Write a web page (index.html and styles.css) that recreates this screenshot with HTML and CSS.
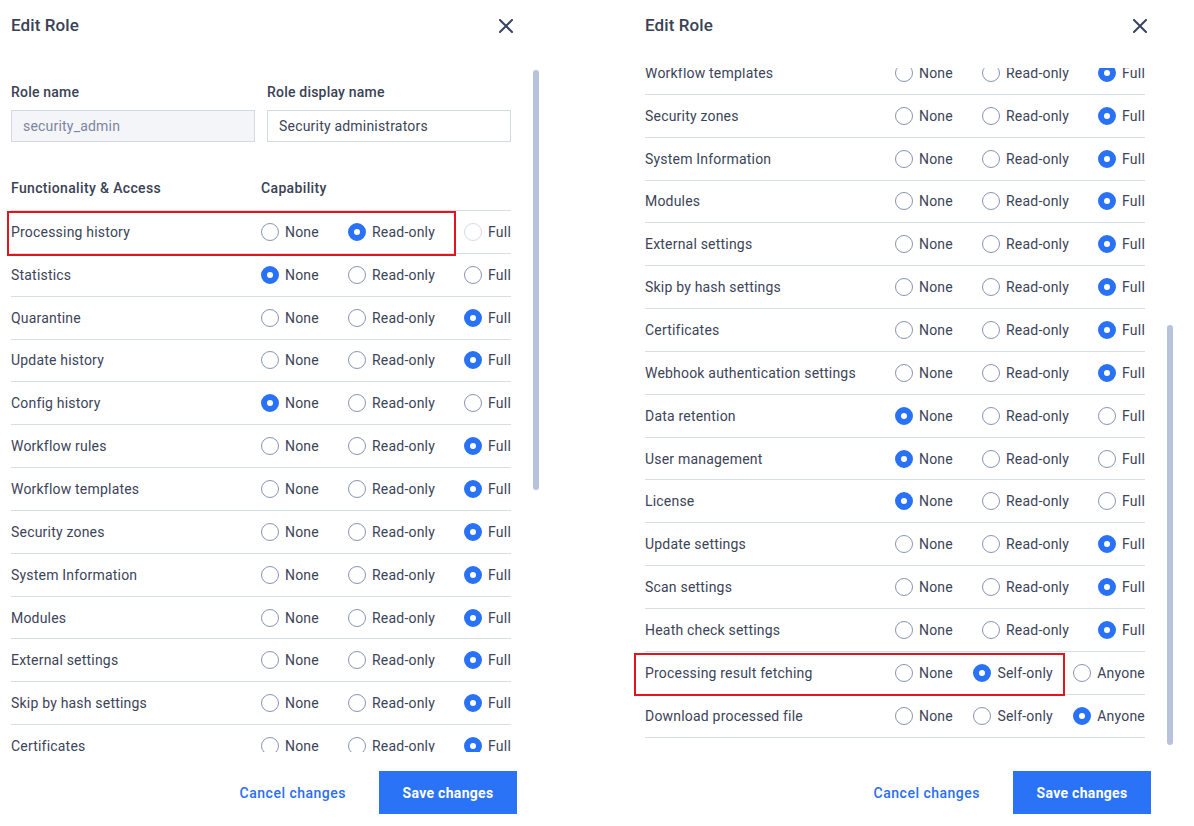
FILE: index.html
```html
<!DOCTYPE html>
<html lang="en">
<head>
<meta charset="utf-8">
<title>Edit Role</title>
<link rel="stylesheet" href="styles.css">
</head>
<body>
<div class="screen">

<section class="panel">
  <header class="panel-head">
    <h2 class="title">Edit Role</h2>
    <button class="close" aria-label="Close"><svg viewBox="0 0 14 14" width="14" height="14"><path d="M1 1 L13 13 M13 1 L1 13" stroke="#3a4460" stroke-width="2" stroke-linecap="square" fill="none"/></svg></button>
  </header>
  <div class="scroll">
    <div class="viewport">
      <div class="content">
        <div class="form">
          <div class="field"><label class="field-label">Role name</label><div class="input input-disabled">security_admin</div></div>
          <div class="field"><label class="field-label">Role display name</label><div class="input">Security administrators</div></div>
        </div>
        <div class="table-head"><span class="th-name">Functionality &amp; Access</span><span class="th-cap">Capability</span></div>
        <div class="row hl-a"><span class="name">Processing history</span><div class="opts"><span class="opt"><i class="radio"></i>None</span><span class="opt"><i class="radio on"></i>Read-only</span><span class="opt"><i class="radio dis"></i>Full</span></div></div>
        <div class="row"><span class="name">Statistics</span><div class="opts"><span class="opt"><i class="radio on"></i>None</span><span class="opt"><i class="radio"></i>Read-only</span><span class="opt"><i class="radio"></i>Full</span></div></div>
        <div class="row"><span class="name">Quarantine</span><div class="opts"><span class="opt"><i class="radio"></i>None</span><span class="opt"><i class="radio"></i>Read-only</span><span class="opt"><i class="radio on"></i>Full</span></div></div>
        <div class="row"><span class="name">Update history</span><div class="opts"><span class="opt"><i class="radio"></i>None</span><span class="opt"><i class="radio"></i>Read-only</span><span class="opt"><i class="radio on"></i>Full</span></div></div>
        <div class="row"><span class="name">Config history</span><div class="opts"><span class="opt"><i class="radio on"></i>None</span><span class="opt"><i class="radio"></i>Read-only</span><span class="opt"><i class="radio"></i>Full</span></div></div>
        <div class="row"><span class="name">Workflow rules</span><div class="opts"><span class="opt"><i class="radio"></i>None</span><span class="opt"><i class="radio"></i>Read-only</span><span class="opt"><i class="radio on"></i>Full</span></div></div>
        <div class="row"><span class="name">Workflow templates</span><div class="opts"><span class="opt"><i class="radio"></i>None</span><span class="opt"><i class="radio"></i>Read-only</span><span class="opt"><i class="radio on"></i>Full</span></div></div>
        <div class="row"><span class="name">Security zones</span><div class="opts"><span class="opt"><i class="radio"></i>None</span><span class="opt"><i class="radio"></i>Read-only</span><span class="opt"><i class="radio on"></i>Full</span></div></div>
        <div class="row"><span class="name">System Information</span><div class="opts"><span class="opt"><i class="radio"></i>None</span><span class="opt"><i class="radio"></i>Read-only</span><span class="opt"><i class="radio on"></i>Full</span></div></div>
        <div class="row"><span class="name">Modules</span><div class="opts"><span class="opt"><i class="radio"></i>None</span><span class="opt"><i class="radio"></i>Read-only</span><span class="opt"><i class="radio on"></i>Full</span></div></div>
        <div class="row"><span class="name">External settings</span><div class="opts"><span class="opt"><i class="radio"></i>None</span><span class="opt"><i class="radio"></i>Read-only</span><span class="opt"><i class="radio on"></i>Full</span></div></div>
        <div class="row"><span class="name">Skip by hash settings</span><div class="opts"><span class="opt"><i class="radio"></i>None</span><span class="opt"><i class="radio"></i>Read-only</span><span class="opt"><i class="radio on"></i>Full</span></div></div>
        <div class="row"><span class="name">Certificates</span><div class="opts"><span class="opt"><i class="radio"></i>None</span><span class="opt"><i class="radio"></i>Read-only</span><span class="opt"><i class="radio on"></i>Full</span></div></div>
      </div>
    </div>
    <div class="track"><div class="thumb"></div></div>
  </div>
  <footer class="panel-foot">
    <button class="btn-link">Cancel changes</button>
    <button class="btn-primary">Save changes</button>
  </footer>
</section>

<section class="panel">
  <header class="panel-head">
    <h2 class="title">Edit Role</h2>
    <button class="close" aria-label="Close"><svg viewBox="0 0 14 14" width="14" height="14"><path d="M1 1 L13 13 M13 1 L1 13" stroke="#3a4460" stroke-width="2" stroke-linecap="square" fill="none"/></svg></button>
  </header>
  <div class="scroll">
    <div class="viewport">
      <div class="content content-scrolled" style="margin-top:-16px">
        <div class="row"><span class="name">Workflow templates</span><div class="opts"><span class="opt"><i class="radio"></i>None</span><span class="opt"><i class="radio"></i>Read-only</span><span class="opt"><i class="radio on"></i>Full</span></div></div>
        <div class="row"><span class="name">Security zones</span><div class="opts"><span class="opt"><i class="radio"></i>None</span><span class="opt"><i class="radio"></i>Read-only</span><span class="opt"><i class="radio on"></i>Full</span></div></div>
        <div class="row"><span class="name">System Information</span><div class="opts"><span class="opt"><i class="radio"></i>None</span><span class="opt"><i class="radio"></i>Read-only</span><span class="opt"><i class="radio on"></i>Full</span></div></div>
        <div class="row"><span class="name">Modules</span><div class="opts"><span class="opt"><i class="radio"></i>None</span><span class="opt"><i class="radio"></i>Read-only</span><span class="opt"><i class="radio on"></i>Full</span></div></div>
        <div class="row"><span class="name">External settings</span><div class="opts"><span class="opt"><i class="radio"></i>None</span><span class="opt"><i class="radio"></i>Read-only</span><span class="opt"><i class="radio on"></i>Full</span></div></div>
        <div class="row"><span class="name">Skip by hash settings</span><div class="opts"><span class="opt"><i class="radio"></i>None</span><span class="opt"><i class="radio"></i>Read-only</span><span class="opt"><i class="radio on"></i>Full</span></div></div>
        <div class="row"><span class="name">Certificates</span><div class="opts"><span class="opt"><i class="radio"></i>None</span><span class="opt"><i class="radio"></i>Read-only</span><span class="opt"><i class="radio on"></i>Full</span></div></div>
        <div class="row"><span class="name">Webhook authentication settings</span><div class="opts"><span class="opt"><i class="radio"></i>None</span><span class="opt"><i class="radio"></i>Read-only</span><span class="opt"><i class="radio on"></i>Full</span></div></div>
        <div class="row"><span class="name">Data retention</span><div class="opts"><span class="opt"><i class="radio on"></i>None</span><span class="opt"><i class="radio"></i>Read-only</span><span class="opt"><i class="radio"></i>Full</span></div></div>
        <div class="row"><span class="name">User management</span><div class="opts"><span class="opt"><i class="radio on"></i>None</span><span class="opt"><i class="radio"></i>Read-only</span><span class="opt"><i class="radio"></i>Full</span></div></div>
        <div class="row"><span class="name">License</span><div class="opts"><span class="opt"><i class="radio on"></i>None</span><span class="opt"><i class="radio"></i>Read-only</span><span class="opt"><i class="radio"></i>Full</span></div></div>
        <div class="row"><span class="name">Update settings</span><div class="opts"><span class="opt"><i class="radio"></i>None</span><span class="opt"><i class="radio"></i>Read-only</span><span class="opt"><i class="radio on"></i>Full</span></div></div>
        <div class="row"><span class="name">Scan settings</span><div class="opts"><span class="opt"><i class="radio"></i>None</span><span class="opt"><i class="radio"></i>Read-only</span><span class="opt"><i class="radio on"></i>Full</span></div></div>
        <div class="row"><span class="name">Heath check settings</span><div class="opts"><span class="opt"><i class="radio"></i>None</span><span class="opt"><i class="radio"></i>Read-only</span><span class="opt"><i class="radio on"></i>Full</span></div></div>
        <div class="row hl-b"><span class="name">Processing result fetching</span><div class="opts"><span class="opt"><i class="radio"></i>None</span><span class="opt"><i class="radio on"></i>Self-only</span><span class="opt"><i class="radio"></i>Anyone</span></div></div>
        <div class="row"><span class="name">Download processed file</span><div class="opts"><span class="opt"><i class="radio"></i>None</span><span class="opt"><i class="radio"></i>Self-only</span><span class="opt"><i class="radio on"></i>Anyone</span></div></div>
      </div>
    </div>
    <div class="track"><div class="thumb" style="margin-top:255px"></div></div>
  </div>
  <footer class="panel-foot">
    <button class="btn-link">Cancel changes</button>
    <button class="btn-primary">Save changes</button>
  </footer>
</section>

</div>
</body>
</html>
```

FILE: styles.css
```css
* { box-sizing: border-box; }

html, body {
  margin: 0;
  padding: 0;
  background: #ffffff;
}

body {
  font-family: Roboto, "Liberation Sans", sans-serif;
  color: #3c4458;
  font-size: 14px;
  letter-spacing: 0.2px;
}

.screen {
  display: flex;
  gap: 74px;
  width: 1194px;
  height: 826px;
  overflow: hidden;
}

.panel {
  width: 560px;
  height: 826px;
  display: flex;
  flex-direction: column;
}

.panel-head {
  width: 513px;
  height: 50px;
  padding-left: 11px;
  display: flex;
  align-items: center;
  justify-content: space-between;
}

.title {
  margin: 0;
  font-size: 17px;
  font-weight: 500;
  letter-spacing: 0.1px;
  color: #3a4256;
}

.close {
  width: 14px;
  height: 14px;
  padding: 0;
  border: 0;
  background: none;
  display: flex;
  margin-top: 1px;
}

.scroll {
  margin-top: 18px;
  height: 684px;
  display: flex;
}

.viewport {
  width: 511px;
  height: 684px;
  padding-left: 11px;
  overflow: hidden;
}

.content {
  padding-top: 14px;
  padding-bottom: 15px;
}

.content-scrolled {
  padding-top: 0;
}

.track {
  width: 6px;
  height: 675px;
  margin-top: 2px;
  margin-left: 22px;
}

.thumb {
  width: 6px;
  height: 420px;
  border-radius: 3px;
  background: #b7c2dd;
}

.form {
  display: grid;
  grid-template-columns: 244px 244px;
  column-gap: 12px;
}

.field-label {
  display: block;
  height: 20px;
  line-height: 20px;
  font-weight: 500;
  color: #3a4256;
  margin-bottom: 8px;
}

.input {
  height: 32px;
  border: 1px solid #d3d9e7;
  padding: 0 11px;
  line-height: 30px;
  color: #3c4458;
  background: #ffffff;
}

.input-disabled {
  background: #f3f5f9;
  color: #7c85a0;
}

.table-head {
  margin-top: 23px;
  height: 46px;
  border-bottom: 1px solid #d8dde8;
  display: grid;
  grid-template-columns: 250px 250px;
  align-items: center;
  font-weight: 500;
  letter-spacing: 0.35px;
  color: #3a4256;
}

.row {
  position: relative;
  height: 42.85px;
  border-bottom: 1px solid #d8dde8;
  display: grid;
  grid-template-columns: 250px 250px;
  align-items: center;
}

.name {
  white-space: nowrap;
}

.opts {
  display: flex;
  justify-content: space-between;
  align-items: center;
}

.opt {
  display: flex;
  align-items: center;
  gap: 6px;
  white-space: nowrap;
}

.radio {
  display: block;
  width: 18px;
  height: 18px;
  border-radius: 50%;
  border: 1px solid #8a94b2;
  background: #ffffff;
  flex: none;
}

.radio.on {
  border: 6px solid #2a72f5;
}

.radio.dis {
  border-color: #d6dbe6;
}

.hl-a::after,
.hl-b::after {
  content: "";
  position: absolute;
  border: 2px solid #e3141c;
  pointer-events: none;
}

.hl-a::after {
  left: -4px;
  width: 445px;
  top: 0;
  height: 41px;
}

.hl-b::after {
  left: -11px;
  width: 427px;
  top: 1px;
  height: 39px;
}

.panel-foot {
  width: 517px;
  padding-top: 19px;
  display: flex;
  justify-content: flex-end;
  align-items: center;
}

.btn-link {
  border: 0;
  background: none;
  padding: 0;
  margin-right: 33px;
  font-family: inherit;
  font-size: 14px;
  font-weight: 500;
  letter-spacing: 0.5px;
  color: #2b6ef2;
}

.btn-primary {
  width: 138px;
  height: 43px;
  border: 0;
  background: #2a73f7;
  color: #ffffff;
  font-family: inherit;
  font-size: 14px;
  font-weight: 700;
  letter-spacing: 0.3px;
}
```
